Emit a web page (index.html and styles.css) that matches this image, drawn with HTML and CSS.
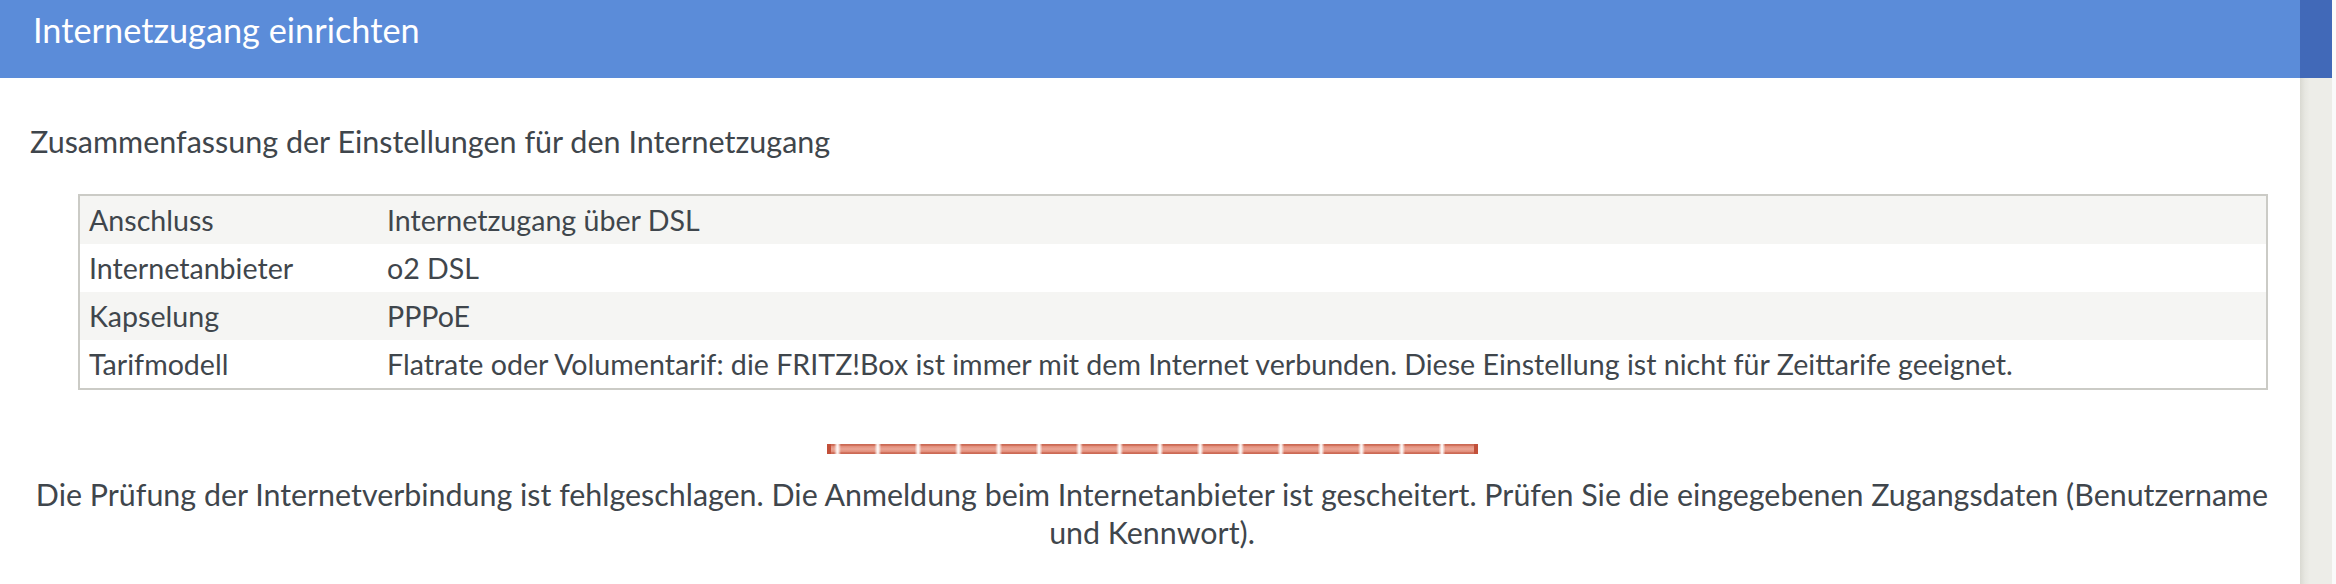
FILE: index.html
```html
<!DOCTYPE html>
<html lang="de">
<head>
<meta charset="utf-8">
<title>Internetzugang einrichten</title>
<link rel="stylesheet" href="styles.css">
</head>
<body>
<div class="page">
  <div class="main">
    <header class="titlebar">
      <h1 class="title">Internetzugang einrichten</h1>
    </header>
    <div class="content">
      <p class="summary">Zusammenfassung der Einstellungen für den Internetzugang</p>
      <table class="settings">
        <tbody>
          <tr><td class="label">Anschluss</td><td class="value">Internetzugang über DSL</td></tr>
          <tr><td class="label">Internetanbieter</td><td class="value">o2 DSL</td></tr>
          <tr><td class="label">Kapselung</td><td class="value">PPPoE</td></tr>
          <tr><td class="label">Tarifmodell</td><td class="value">Flatrate oder Volumentarif: die FRITZ!Box ist immer mit dem Internet verbunden. Diese Einstellung ist nicht für Zeittarife geeignet.</td></tr>
        </tbody>
      </table>
      <div class="progress" role="progressbar" aria-label="Prüfung"></div>
      <p class="message">Die Prüfung der Internetverbindung ist fehlgeschlagen. Die Anmeldung beim Internetanbieter ist gescheitert. Prüfen Sie die eingegebenen Zugangsdaten (Benutzername und Kennwort).</p>
    </div>
  </div>
  <aside class="side">
    <div class="side-top"></div>
    <div class="side-body"></div>
  </aside>
  <div class="edge"></div>
</div>
</body>
</html>
```
FILE: styles.css
```css
html, body {
  margin: 0;
  padding: 0;
  background: #ffffff;
}

body {
  font-family: "Lato", "Open Sans", sans-serif;
  color: #3f464c;
}

.page {
  display: flex;
  width: 2336px;
  height: 584px;
  overflow: hidden;
}

.main {
  width: 2300px;
  flex: none;
  display: flex;
  flex-direction: column;
}

.titlebar {
  height: 78px;
  box-sizing: border-box;
  background: #5b8cd9;
  padding: 9px 0 0 33px;
}

.title {
  margin: 0;
  font-size: 34.3px;
  font-weight: 400;
  line-height: 1.2;
  color: #ffffff;
}

.content {
  padding: 0 26px 0 30px;
}

.summary {
  margin: 45px 0 0;
  font-size: 30.5px;
  line-height: 1.2;
}

.settings {
  margin: 34px 6px 0 48px;
  width: 2190px;
  border-collapse: collapse;
  border: 2px solid #cbcbc6;
  font-size: 28.6px;
}

.settings tr:nth-child(odd) {
  background: #f5f5f3;
}

.settings td {
  height: 48px;
  padding: 0 0 0 9px;
  line-height: 48px;
  vertical-align: middle;
  white-space: nowrap;
}

.settings td.label {
  width: 299px;
  box-sizing: border-box;
}

.progress {
  width: 651px;
  height: 10px;
  margin: 54px auto 0;
  box-sizing: border-box;
  border-left: 4px solid #c2503a;
  border-right: 4px solid #c2503a;
  background:
    repeating-linear-gradient(90deg,
      rgba(255,255,255,0) 0px,
      rgba(255,255,255,0) 3px,
      rgba(255,255,255,0.9) 6px,
      rgba(255,255,255,0.9) 7px,
      rgba(255,255,255,0) 10px,
      rgba(255,255,255,0) 40.3px),
    linear-gradient(180deg,
      #cc6a55 0%,
      #cc6a55 12%,
      #e3907d 25%,
      #eaa595 50%,
      #e3907d 75%,
      #cc6a55 88%,
      #cc6a55 100%);
}

.message {
  margin: 21px 0 0;
  font-size: 30.4px;
  line-height: 38px;
  text-align: center;
}

.side {
  width: 32px;
  flex: none;
  display: flex;
  flex-direction: column;
}

.side-top {
  height: 78px;
  background: #4169b8;
}

.side-body {
  flex: 1;
  background: linear-gradient(90deg, #d9d9d2 0px, #e7e7e1 5px, #ededE8 10px, #ededE8 100%);
}

.edge {
  width: 4px;
  flex: none;
  background: #fafafa;
}
```
